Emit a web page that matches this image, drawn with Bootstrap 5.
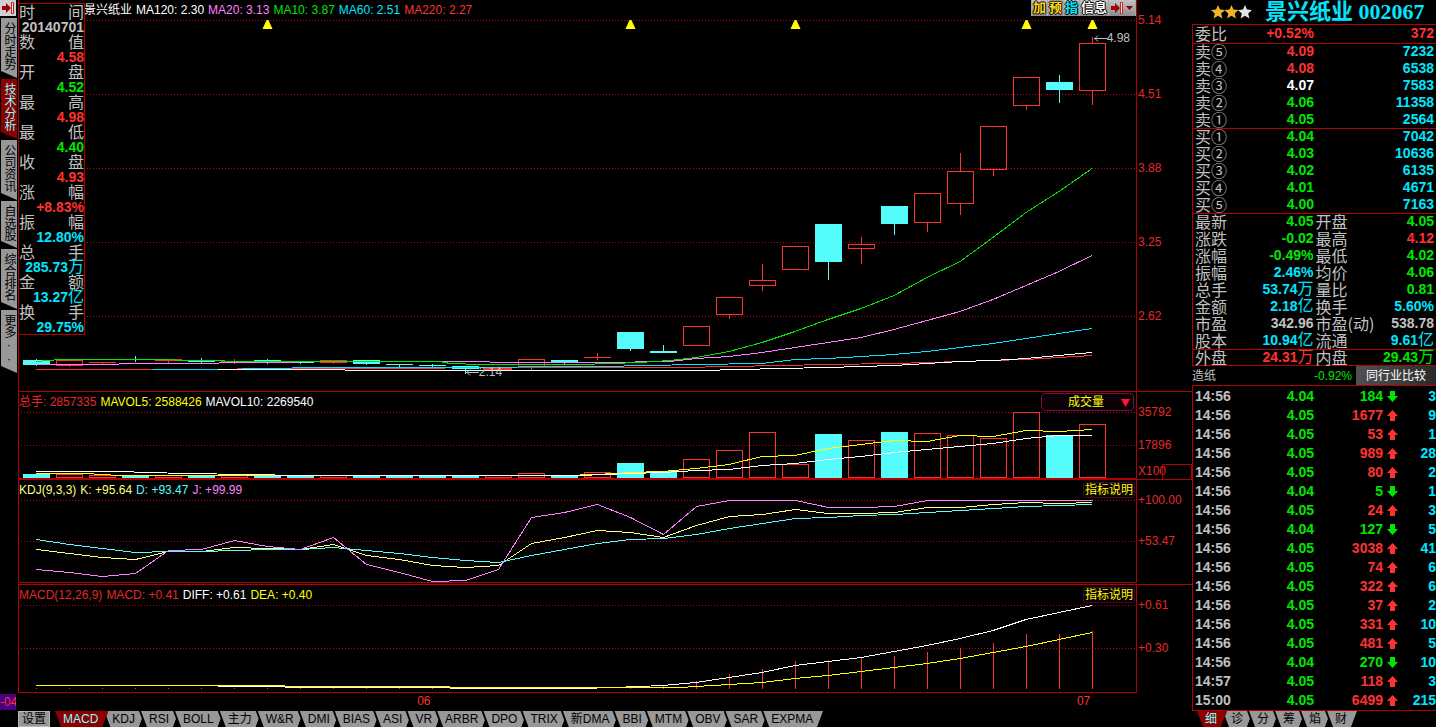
<!DOCTYPE html>
<html lang="zh-CN">
<head>
<meta charset="utf-8">
<meta name="viewport" content="width=device-width, initial-scale=1">
<title>景兴纸业 002067</title>
<link href="https://cdn.jsdelivr.net/npm/bootstrap@5.3.0/dist/css/bootstrap.min.css" rel="stylesheet">
<style>
:root{--line:#b40000;--up:#ff3232;--down:#00e600;--cy:#00e6ff;--fill:#54fcfc;--gray:#c0c0c0}
body{background:#000;color:var(--gray);font:12px/16px "Liberation Sans","Noto Sans CJK SC",sans-serif;overflow-x:hidden}
button,select{font:inherit;border:0;padding:0;border-radius:0}
.up{color:var(--up)}.dn{color:var(--down)}.cy{color:var(--cy)}.wh{color:#fff}.ye{color:#ff0}.pk{color:#ff80ff}.ky{color:#ffff80}.kc{color:var(--fill)}.gy{color:var(--gray)}
.axred{color:#e62828}
/* left rail */
.rail{width:18px;flex:none;padding-bottom:17px}
.rail-icon{width:16px;height:16px;background:#d0d0d0;margin-bottom:2px}
.vtab{width:16px;margin-left:1px;background:#989898;color:#000;writing-mode:vertical-rl;text-orientation:upright;font-size:12px;line-height:16px;padding:4px 0 7px;margin-bottom:1px;clip-path:polygon(0 0,100% 0,100% 100%,0 calc(100% - 7px));text-align:left}
.vtab.on{background:#8c0000;color:#80ffff}
.vtab-4{height:60px}.vtab-3{height:47px}.vtab-more{height:63px}
.datetag{background:#460082;color:var(--up);height:16px;width:16px;overflow:hidden;white-space:nowrap}
/* chart panes */
.charts{min-width:0}
.prow{border-bottom:1px solid var(--line)}
.prow-last{border-bottom:0}
.pane{border-left:1px solid var(--line);border-right:1px solid var(--line);min-width:0}
.pane svg{width:100%}
.p-price svg{height:391px}
.p-vol{border-bottom:1px solid var(--line)}.p-vol svg{height:86px}
.p-kdj{border-bottom:1px solid var(--line);margin-bottom:1px}.p-kdj svg{height:102px}
.p-macd{border-bottom:1px solid var(--line)}.p-macd svg{height:107px}
.axis{width:55px;flex:none;padding:10px 0 0 1px;line-height:20px;color:#e62828}
.g54{gap:54px}.g13{gap:13px}.g21{gap:21px}.g23{gap:23px}
.axis .unit{line-height:16px}
.unitbox{right:0;bottom:0;width:30px;height:15px;border:1px solid var(--line);border-bottom:0}
.legend{top:2px;left:0;gap:4px;white-space:nowrap}
.legend-price{left:65px}
.info{left:-1px;top:3px;width:67px;height:332px;border:1px solid var(--line);background:#000;font-size:16px;line-height:15px}
.info dt{display:flex;justify-content:space-between;height:15px;font:400 16px/15px "Noto Sans CJK SC",sans-serif}
.info dd{margin:0;height:15px;line-height:17px;text-align:right;white-space:nowrap}
.num{font-weight:700;font-size:14px}
.cjk{font:400 16px/0 "Noto Sans CJK SC",sans-serif}
.tools{right:0;top:0;height:16px;background:#a8a8a8;gap:1px;padding:0 1px}
.tools button{background:linear-gradient(#c4c4c4,#8c8c8c);height:16px;font-weight:700;font-size:13px;line-height:16px;padding:0 1px;text-shadow:1px 0 #000,-1px 0 #000,0 1px #000,0 -1px #000}
.gold{color:#ffd820}
.tip{white-space:nowrap;line-height:16px;color:var(--gray)}
.tip-high{right:6px;top:30px}
.tip-low{left:40%;top:364px}
.pick{right:2px;top:1px;width:93px;height:18px}
.pick select{appearance:none;width:100%;height:18px;background:#0a0006;border:1px solid #780a46;border-radius:4px;color:#ff0;padding-left:26px;line-height:16px}
.pick svg{right:4px;top:6px;width:9px!important;height:8px!important;pointer-events:none}
.help{right:1px;top:2px;height:16px;background:#0a0006;color:#ff0;border:1px solid #46062c;border-radius:3px;line-height:14px;padding:0 1px}
.dates{height:18px;color:var(--up)}
.dates span{position:absolute;top:0}
/* slanted tabs */
.tabs button{position:relative;z-index:0;height:16px;line-height:16px;padding:0 10px;margin-left:-6px;background:#000;color:#000;clip-path:polygon(0 0,100% 0,calc(100% - 6px) 100%,6px 100%);white-space:nowrap}
.tabs button:nth-child(n+8){margin-left:-7px}
.tabs button::before{content:"";position:absolute;inset:0;z-index:-1;background:#989898;clip-path:polygon(2px 0,100% 0,calc(100% - 6px) 100%,8px 100%)}
.tabs button.on{color:#80ffff;z-index:2}
.tabs button.on::before{background:#8c0000}
.setbtn{background:#989898;color:#000;height:16px;width:32px;margin-right:9px;border:1px solid #b8b8b8;line-height:14px}
/* quote panel */
.quote{width:244px;flex:none}
.stockname{height:24px;font:700 22px/24px "Liberation Serif","Noto Sans CJK SC",serif;color:var(--cy);padding-left:19px;white-space:nowrap}
.stockname h1{font:inherit;margin:0 0 0 13px}
.qbox{border-left:1px solid var(--line)}
.sec{box-shadow:inset 0 1px 0 var(--line)}
.sec table{width:100%;table-layout:fixed;border-collapse:collapse}
.sec td,.sec th{padding:0;height:17px;line-height:17px;vertical-align:middle;text-align:right;white-space:nowrap}
.sec th{font:400 16px/17px "Noto Sans CJK SC",sans-serif;text-align:left;color:var(--gray);padding-left:2px}
.sec td{font-weight:700;font-size:14px}
.sec td:last-child{padding-right:2px}
.sec .c-vol{width:122px}
.sec-first td,.sec-first th{height:19px;line-height:19px}
.sec-out td,.sec-out th{height:16px;line-height:16px}
.c-lab{width:60px}.c-lab2{width:62px}
.industry{height:20px;line-height:20px;padding-top:1px}
.industry button{width:80px;height:19px;background:linear-gradient(90deg,#505050,#3c3c3c 60%,#282828);color:#fff}
.ticks{padding-top:1px}
.sec.ticks td{height:19px;line-height:20px}
.sec.ticks td:first-child{text-align:left;color:var(--gray);padding-left:2px}
.sec.ticks td:last-child{padding-right:0}
.sec.ticks tr{height:19px}
.ticks svg{width:11px;height:11px;display:block;margin-left:4px}
.sec.ticks td{line-height:19px}
.sec.ticks table{margin-top:1px}
.qtabs{padding:1px 0 0 9px}
</style>
</head>
<body>
<main class="d-flex min-vh-100">

<nav class="rail d-flex flex-column" aria-label="功能">
  <button class="rail-icon" aria-label="收起"><svg width="16" height="16" class="d-block"><path d="M2 6h4V3l5 5-5 5v-3H2z" fill="#a00000"/><path d="M11.500 2.500h2v11h-2z" fill="#e8e8e8" stroke="#d02020"/></svg></button>
  <button class="vtab vtab-4">分时走势</button>
  <button class="vtab vtab-4 on">技术分析</button>
  <button class="vtab vtab-4">公司资讯</button>
  <button class="vtab vtab-3">自选股</button>
  <button class="vtab vtab-4">综合排名</button>
  <button class="vtab vtab-more">更多··</button>
  <div class="datetag mt-auto">-04</div>
</nav>

<section class="charts flex-grow-1 d-flex flex-column">
  <div class="prow d-flex">
    <div class="pane p-price flex-grow-1 position-relative">
      <svg id="price" class="d-block" viewBox="19 0 1117 391" preserveAspectRatio="none" shape-rendering="crispEdges"></svg>
      <div class="legend legend-price position-absolute d-flex"><span class="wh">景兴纸业</span><span class="wh">MA120: 2.30</span><span class="pk">MA20: 3.13</span><span class="dn">MA10: 3.87</span><span class="cy">MA60: 2.51</span><span class="up">MA220: 2.27</span></div>
      <dl id="info" class="info position-absolute m-0"></dl>
      <div class="tip tip-high position-absolute d-flex align-items-center"><svg style="width:13px;height:7px"><path d="M0 3.500h13M4 .5L1 3.500l3 3" stroke="#c0c0c0" fill="none"/></svg><span>4.98</span></div>
      <div class="tip tip-low position-absolute d-flex align-items-center"><svg style="width:13px;height:7px"><path d="M0 3.500h13M4 .5L1 3.500l3 3" stroke="#c0c0c0" fill="none"/></svg><span>2.14</span></div>
      <div class="tools position-absolute d-flex">
        <button class="gold">加</button><button class="gold">预</button><button class="cy">指</button><button class="wh">信息</button>
        <button aria-label="展开"><svg style="width:24px;height:16px" class="d-block"><path d="M1 6h4V3l5 5-5 5v-3H1z" fill="#a00000"/><path d="M10.500 2.500h2v11h-2z" fill="#e8e8e8" stroke="#d02020"/><path d="M16 6h7l-3.500 4z" fill="#900000"/></svg></button>
      </div>
    </div>
    <div class="axis g54 d-flex flex-column"><span>5.14</span><span>4.51</span><span>3.88</span><span>3.25</span><span>2.62</span></div>
  </div>

  <div class="prow d-flex">
    <div class="pane p-vol flex-grow-1 position-relative">
      <svg id="vol" class="d-block" viewBox="19 392 1117 86" preserveAspectRatio="none" shape-rendering="crispEdges"></svg>
      <div class="legend position-absolute d-flex"><span class="axred">总手: 2857335</span><span class="ye">MAVOL5: 2588426</span><span class="wh">MAVOL10: 2269540</span></div>
      <div class="pick position-absolute"><select aria-label="副图指标"><option>成交量</option></select><svg class="position-absolute" viewBox="0 0 9 8"><path d="M0 0h9L4.500 8z" fill="#ff143c"/></svg></div>
    </div>
    <div class="axis d-flex flex-column position-relative"><div class="g13 d-flex flex-column"><span>35792</span><span>17896</span></div><span class="unit mt-auto">X100</span><i class="unitbox position-absolute"></i></div>
  </div>

  <div class="prow d-flex">
    <div class="pane p-kdj flex-grow-1 position-relative">
      <svg id="kdj" class="d-block" viewBox="19 480 1117 102" preserveAspectRatio="none" shape-rendering="crispEdges"></svg>
      <div class="legend position-absolute d-flex"><span class="ky">KDJ(9,3,3)</span><span class="ky">K: +95.64</span><span class="kc">D: +93.47</span><span class="pk">J: +99.99</span></div>
      <button class="help position-absolute">指标说明</button>
    </div>
    <div class="axis g21 d-flex flex-column"><span>+100.00</span><span>+53.47</span></div>
  </div>

  <div class="prow prow-last d-flex">
    <div class="pane p-macd flex-grow-1 position-relative">
      <svg id="macd" class="d-block" viewBox="19 585 1117 107" preserveAspectRatio="none" shape-rendering="crispEdges"></svg>
      <div class="legend position-absolute d-flex"><span class="axred">MACD(12,26,9)</span><span class="axred">MACD: +0.41</span><span class="wh">DIFF: +0.61</span><span class="ye">DEA: +0.40</span></div>
      <button class="help position-absolute">指标说明</button>
    </div>
    <div class="axis g23 d-flex flex-column"><span>+0.61</span><span>+0.30</span></div>
  </div>

  <div class="dates position-relative"><span style="left:34%">06</span><span style="left:90.200%">07</span></div>
  <div class="d-flex"><button class="setbtn">设置</button><div class="tabs d-flex" id="indTabs"></div></div>
</section>

<aside class="quote">
  <div class="stockname d-flex align-items-center">
    <svg width="41" height="14" viewBox="0 0 41 14"><defs><path id="star" d="M7 0l2 4.600 5 .5-3.800 3.300 1.200 5L7 10.800 2.600 13.400l1.200-5L0 5.100l5-.5z"/></defs><use href="#star" fill="#f0b428"/><use href="#star" x="13.500" fill="#f0b428"/><use href="#star" x="27" fill="#e4e4e4"/></svg>
    <h1>景兴纸业 002067</h1>
  </div>
  <div class="qbox">
    <div class="sec sec-first"><table><tr><th class="c-lab">委比</th><td class="up">+0.52%</td><td class="up c-vol">372</td></tr></table></div>
    <div class="sec"><table id="asks"></table></div>
    <div class="sec"><table id="bids"></table></div>
    <div class="sec"><table id="stats"></table></div>
    <div class="sec sec-out"><table id="outer"></table></div>
  </div>
  <div class="sec industry d-flex"><span class="gy">造纸</span><span class="dn ms-auto me-1">-0.92%</span><button>同行业比较</button></div>
  <div class="qbox">
    <div class="sec ticks"><table id="ticks"></table></div>
  </div>
  <div class="sec qtabs tabs d-flex" id="qTabs"></div>
</aside>
</main>

<script>
const $ = id => document.getElementById(id);
const X = i => 36.5 + 33 * i;
const RED = '#ff3232', CY = '#54fcfc';

// series: one value for each trading day, or [x, y] pairs where a line starts later
const line = (pts, color) => `<polyline fill="none" stroke="${color}" points="${pts.map((p, i) => Array.isArray(p) ? p[0] + ',' + (p[1] + .5) : X(i) + ',' + (p + .5)).join(' ')}"/>`;
const grid = ys => ys.map(y => `<path d="M21 ${y}.5H1136" stroke="#c80000" stroke-dasharray="1 2"/>`).join('');
const box = (i, t, b, up) => up
  ? `<rect x="${X(i) - 13}" y="${t + .5}" width="26" height="${Math.max(b - t, 0.01)}" fill="none" stroke="${RED}"/>`
  : `<rect x="${X(i) - 13.5}" y="${t}" width="27" height="${b - t + 1}" fill="${CY}"/>`;

// candles: up?, body top, body bottom, high, low
const candles = [
 [0,360,364,359,365],[1,360,365,360,366],[1,362,362,362,363],[0,359,359,356,361],[1,359,360,359,363],[0,361,361,358,363],[1,361,362,359,363],[0,360,360,359,363],
 [0,362,362,362,363],[1,360,362,360,363],[0,360,363,360,364],[0,364,364,364,366],[0,365,365,364,366],[0,366,368,366,373],[1,368,369,366,369],[1,359,366,359,369],
 [0,360,361,360,363],[1,357,357,353,359],[0,332,348,332,350],[0,351,352,345,352],[1,326,345,326,345],[1,297,314,297,318],[1,280,285,264,290],[1,246,269,246,269],
 [0,224,261,224,279],[1,244,248,237,263],[0,206,223,206,234],[1,193,222,193,231],[1,171,203,153,214],[1,126,169,126,175],[1,77,105,77,109],[0,82,89,75,102],[1,43,90,37,104]];
$('price').innerHTML = grid([20,94,168,242,316]) +
 candles.map(([u,t,b,h,l],i) => `<path d="M${X(i)} ${h}V${t}M${X(i)} ${b+1}V${l+1}" stroke="${u?RED:CY}"/>` + box(i,t,b,u)).join('') +
 line([[36,369],[440,368],[450,367],[680,367],[780,365],[828,364],[895,363],[960,361],[993,360],[1026,359],[1059,357],[1092,355]], RED) +
 line([[152,369],[217,369],[317,367],[440,367],[600,366],[696,364],[762,363],[795,359],[828,358],[861,356],[894,354],[927,351],[960,347],[993,343],[1026,338],[1059,333],[1092,328]], '#00e6ff') +
 line([[218,369],[340,369],[350,370],[700,370],[780,368],[828,367],[894,365],[960,361],[993,360],[1026,358],[1059,355],[1092,352]], '#ffffff') +
 line([[36,364],[118,364],[120,363],[218,363],[220,362],[380,361],[480,361],[500,362],[600,362],[670,361],[696,358],[729,356],[762,352],[795,347],[828,342],[861,337],[894,329],[927,320],[960,311],[993,299],[1026,285],[1059,271],[1092,255]], '#ff80ff') +
 line([[36,361],[60,359],[150,359],[250,361],[440,361],[450,363],[482,364],[580,364],[640,362],[670,360],[696,357],[729,351],[762,342],[795,331],[828,319],[861,308],[894,295],[927,277],[960,261],[993,237],[1026,212],[1059,191],[1092,168]], '#00e600') +
 [7,18,23,30,32].map(i => `<path shape-rendering="auto" d="M${X(i)-1} 20h2l4 9h-10z" fill="#ff0"/>`).join('');

// volume: up?, bar top
const vols = [[0,474],[1,474],[1,475],[0,475],[1,475],[0,475],[1,475],[0,475],[0,475],[1,475],[0,475],[0,475],[0,475],[0,475],[1,475],[1,473],[0,475],[1,472],[0,463],[0,471],[1,459],[1,450],[1,432],[1,464],[0,434],[1,440],[0,432],[1,433],[1,435],[1,438],[1,412],[0,435],[1,424]];
$('vol').innerHTML = grid([412,445]) + vols.map(([u,t],i) => box(i,t,477,u)).join('') +
 line([[36,473],[85,473],[120,475],[564,475],[597,474],[630,472],[663,471],[696,468],[729,464],[762,456],[795,455],[828,448],[861,444],[894,440],[927,441],[960,435],[993,436],[1026,430],[1059,431],[1092,429]], '#ffff00') +
 line([[36,471],[118,471],[150,472],[184,473],[250,474],[300,475],[580,475],[630,473],[663,472],[696,470],[729,469],[762,465],[795,463],[828,459],[861,456],[894,452],[927,449],[960,446],[993,443],[1026,438],[1059,435],[1092,435]], '#ffffff');

$('kdj').innerHTML = grid([500,541]) +
 line([549,553,557,559,551,551,547,548,549,544,555,559,565,567,565,543,537,530,532,537,525,516,514,509,513,513,512,507,507,504,502,503,502], '#ffff80') +
 line([539,544,548,552,551,551,550,549,549,547,550,553,557,560,562,555,549,543,539,538,534,528,523,518,517,515,514,512,510,508,506,505,504], CY) +
 line([569,572,576,573,550,549,540,546,549,537,564,572,581,580,569,517,512,504,517,534,506,500,500,500,507,507,506,500,500,500,500,500,500], '#ff80ff');

const hist = {18:687,19:686,20:681,21:674,22:669,23:661,24:660,25:658,26:656,27:652,28:648,29:643,30:634,31:634,32:631};
$('macd').innerHTML = grid([605,648]) +
 Object.entries(hist).map(([i,t]) => `<path d="M${X(+i)} ${t}V689" stroke="${RED}"/>`).join('') +
 Array.from({length:15},(_,i) => `<path d="M${X(i)} 688v1" stroke="${i<2?RED:'#00c000'}"/>`).join('') +
 line([[36,685],[218,685],[219,686],[350,687],[449,687],[451,688],[580,688],[614,687],[663,685],[696,682],[729,677],[762,672],[795,665],[828,661],[861,657],[894,651],[927,645],[960,638],[993,630],[1026,619],[1059,612],[1092,605]], '#ffffff') +
 line([[36,685],[284,685],[286,686],[449,686],[451,687],[680,687],[729,684],[762,682],[795,678],[828,675],[861,671],[894,667],[927,663],[960,658],[993,652],[1026,646],[1059,639],[1092,632]], '#ffff00');

// numbers end in 万 or 亿 drawn in the thinner full-width face
const num = s => s.replace(/[万亿]$/, m => `<span class="cjk">${m}</span>`);

$('info').innerHTML = [['时间','20140701','gy'],['数值','4.58','up'],['开盘','4.52','dn'],['最高','4.98','up'],['最低','4.40','dn'],['收盘','4.93','up'],['涨幅','+8.83%','up'],['振幅','12.80%','cy'],['总手','285.73万','cy'],['金额','13.27亿','cy'],['换手','29.75%','cy']]
 .map(([k,v,c]) => `<dt><span>${k[0]}</span><span>${k[1]}</span></dt><dd class="num ${c}">${num(v)}</dd>`).join('');

const book = (side, rows) => rows.map(([n,p,c,v]) => `<tr><th class="c-lab">${side}${n}</th><td class="${c}">${p}</td><td class="cy c-vol">${v}</td></tr>`).join('');
$('asks').innerHTML = book('卖', [['⑤','4.09','up',7232],['④','4.08','up',6538],['③','4.07','wh',7583],['②','4.06','dn',11358],['①','4.05','dn',2564]]);
$('bids').innerHTML = book('买', [['①','4.04','dn',7042],['②','4.03','dn',10636],['③','4.02','dn',6135],['④','4.01','dn',4671],['⑤','4.00','dn',7163]]);

const pairs = rows => rows.map(([a,b,bc,c,d,dc]) => `<tr><th class="c-lab">${a}</th><td class="${bc}">${num(b)}</td><th class="c-lab2">${c}</th><td class="${dc}">${num(d)}</td></tr>`).join('');
$('stats').innerHTML = pairs([['最新','4.05','dn','开盘','4.05','dn'],['涨跌','-0.02','dn','最高','4.12','up'],['涨幅','-0.49%','dn','最低','4.02','dn'],['振幅','2.46%','cy','均价','4.06','dn'],['总手','53.74万','cy','量比','0.81','dn'],['金额','2.18亿','cy','换手','5.60%','cy'],['市盈','342.96','gy','市盈(动)','538.78','gy'],['股本','10.94亿','cy','流通','9.61亿','cy']]);
$('outer').innerHTML = pairs([['外盘','24.31万','up','内盘','29.43万','dn']]);

const arrow = up => `<svg viewBox="0 0 11 11"><path d="${up ? 'M5.500 0L11 6H8v5H3V6H0z' : 'M5.500 11L0 5h3V0h5v5h3z'}" fill="${up ? RED : '#00e600'}"/></svg>`;
$('ticks').innerHTML = '<colgroup><col style="width:60px"><col style="width:61px"><col style="width:69px"><col style="width:18px"><col></colgroup>' +
 [[184,0,3],[1677,1,9],[53,1,1],[989,1,28],[80,1,2],[5,0,1],[24,1,3],[127,0,5],[3038,1,41],[74,1,6],[322,1,6],[37,1,2],[331,1,10],[481,1,5],[270,0,10],[118,1,3],[6499,1,215]]
 .map(([v,u,n],i) => `<tr><td>${i===16?'15:00':i===15?'14:57':'14:56'}</td><td class="dn">${u?'4.05':'4.04'}</td><td class="${u?'up':'dn'}">${v}</td><td>${arrow(u)}</td><td class="cy">${n}</td></tr>`).join('');

const tabs = (names) => names.map((n,i) => `<button${i?'':' class="on"'}>${n}</button>`).join('');
$('indTabs').innerHTML = tabs(['MACD','KDJ','RSI','BOLL','主力','W&amp;R','DMI','BIAS','ASI','VR','ARBR','DPO','TRIX','新DMA','BBI','MTM','OBV','SAR','EXPMA']);
$('qTabs').innerHTML = tabs(['细','诊','分','筹','焰','财']);
</script>
<script src="https://cdn.jsdelivr.net/npm/bootstrap@5.3.0/dist/js/bootstrap.bundle.min.js"></script>
</body>
</html>
